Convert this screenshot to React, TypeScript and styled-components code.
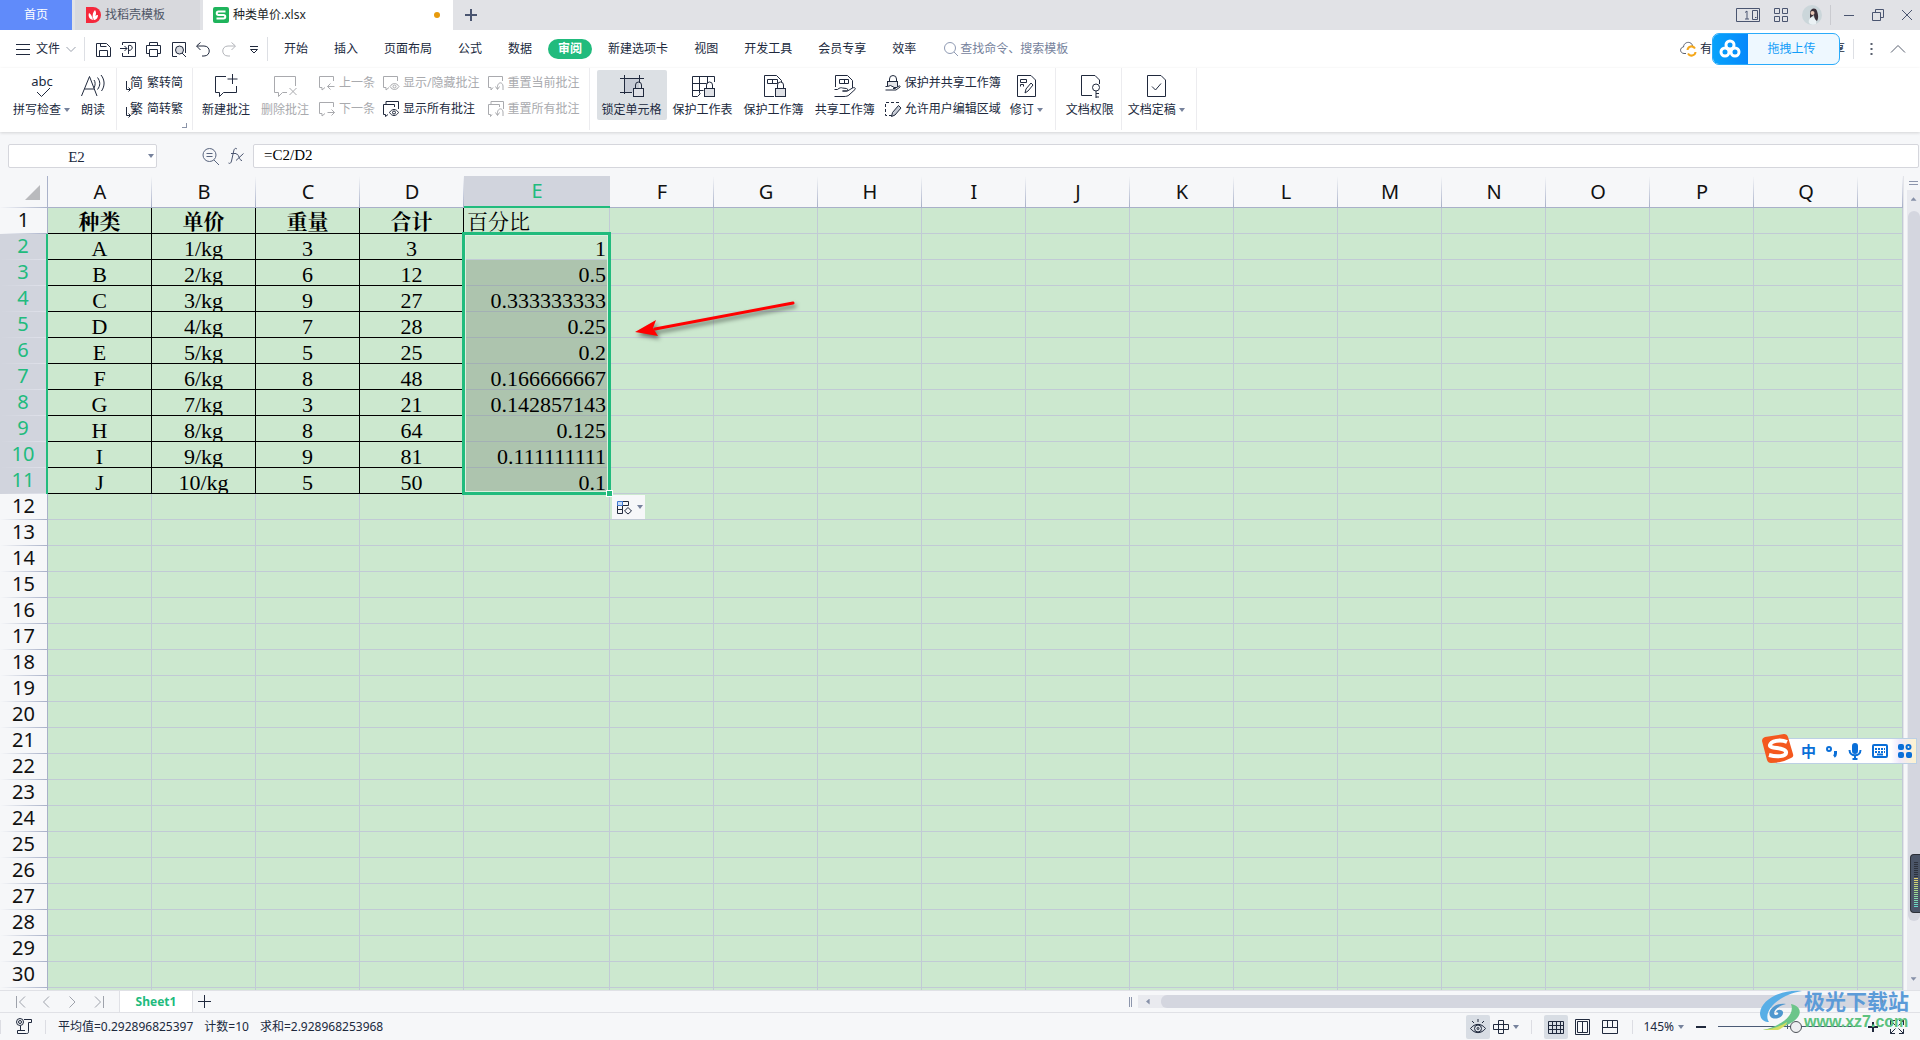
import React from "react";
import styled, { createGlobalStyle, css } from "styled-components";

const ui = `"Noto Sans", "Noto Sans CJK SC", sans-serif`;
const song = `"Liberation Serif", "SimSun", "Noto Serif CJK SC", "Noto Sans CJK SC", serif`;
const ink = "#20293d";
const dim = "#a9aaae";
const green = "#21bb7d";
const gridLine = "#c1cad5";
const headLine = "#a9b1c9";
const sheetFill = "#cce8cf";

const GlobalStyle = createGlobalStyle`
  *, *::before, *::after { box-sizing: border-box; }
  body { margin: 0; }
  button, input { font: inherit; color: inherit; margin: 0; }
  button { border: 0; background: none; padding: 0; cursor: default; }
  svg { display: block; flex: none; fill: none; overflow: visible; }
`;

const Page = styled.div`
  position: relative;
  display: flex;
  flex-direction: column;
  height: 100vh;
  overflow: hidden;
  background: #f6f7f9;
  color: ${ink};
  font: 12px/16px ${ui};
  white-space: nowrap;
`;

const Spacer = styled.div`
  flex: 1;
`;

/* ---------- title bar ---------- */
const TitleBar = styled.header`
  display: flex;
  height: 30px;
  background: #e1e2e6;
  color: #4a5570;
`;
const HomeTab = styled.button`
  width: 72px;
  margin-right: 3px;
  background: #608bfa;
  color: #fff;
`;
const FileTab = styled.button<{ $active?: boolean }>`
  display: flex;
  align-items: center;
  gap: 4px;
  width: ${(p) => (p.$active ? 250 : 125)}px;
  padding: 0 13px 0 10px;
  margin-right: ${(p) => (p.$active ? 0 : 3)}px;
  background: ${(p) => (p.$active ? "#fff" : "#d8d9dd")};
  color: ${(p) => (p.$active ? "#1c1f28" : "#4e5566")};
`;
const UnsavedDot = styled.i`
  width: 6px;
  height: 6px;
  margin-left: auto;
  border-radius: 3px;
  background: #e79a0c;
`;
const NewTab = styled.button`
  width: 36px;
  display: grid;
  place-items: center;
`;
const WindowTools = styled.div`
  display: flex;
  align-items: center;
  gap: 14px;
  padding-right: 7px;
`;
const WindowButtons = styled.div`
  display: flex;
  align-items: center;
  gap: 16px;
  height: 20px;
  padding-left: 12px;
  margin-left: -6px;
  border-left: 1px solid #cacbd0;
`;

/* ---------- menu bar ---------- */
const MenuBar = styled.nav`
  display: flex;
  align-items: center;
  height: 38px;
  padding: 0 14px 0 16px;
  background: #fff;
`;
const FileMenu = styled.button`
  display: flex;
  align-items: center;
  gap: 6px;
  height: 24px;
  padding-right: 8px;
  border-right: 1px solid #dddfe4;
`;
const QuickTools = styled.div`
  display: flex;
  align-items: center;
  gap: 8px;
  height: 24px;
  padding: 0 5px 0 10px;
  border-right: 1px solid #dddfe4;
`;
const MenuTabs = styled.div`
  display: flex;
  gap: 6px;
  padding-left: 6px;
`;
const MenuTab = styled.button<{ $active?: boolean }>`
  height: 20px;
  padding: 0 10px;
  border-radius: 10px;
  ${(p) =>
    p.$active &&
    css`
      background: ${green};
      && {
        color: #fff;
        font-weight: 700;
      }
    `}
`;
const SearchBox = styled.label`
  display: flex;
  align-items: center;
  gap: 2px;
  margin-left: 18px;
  color: #76829c;
  input {
    width: 160px;
    padding: 0;
    border: 0;
    outline: 0;
    background: none;
  }
  input::placeholder {
    color: #76829c;
    opacity: 1;
  }
`;
const CloudState = styled.button`
  display: flex;
  align-items: center;
  gap: 4px;
`;
const UploadButton = styled.button`
  display: flex;
  align-items: center;
  height: 32px;
  width: 128px;
  overflow: hidden;
  border: 1px solid #2aabfa;
  border-radius: 7px;
  background: #eef8ff;
  && {
    color: #129df8;
  }
  svg {
    background: linear-gradient(90deg, #07a3fb, #0788fb);
  }
  span {
    flex: 1;
    padding-right: 4px;
  }
`;
const ShareEnd = styled.span`
  width: 5px;
  overflow: hidden;
  direction: rtl;
`;
const MenuEnd = styled.div`
  display: flex;
  align-items: center;
  gap: 17px;
  height: 20px;
  margin-left: 8px;
  padding-left: 16px;
  border-left: 1px solid #dddfe4;
`;

/* ---------- ribbon ---------- */
const Ribbon = styled.div`
  position: relative;
  display: flex;
  height: 64px;
  padding-bottom: 2px;
  background: #fff;
  box-shadow: 0 1px 3px rgba(0, 0, 0, 0.14);
`;
const Group = styled.div<{ $left?: number; $right?: number }>`
  position: relative;
  display: flex;
  padding: 2px ${(p) => p.$right ?? 5}px 0 ${(p) => p.$left ?? 5}px;
  border-right: 1px solid #ececef;
`;
const Tool = styled.button<{ $off?: boolean; $on?: boolean }>`
  display: flex;
  flex-direction: column;
  align-items: center;
  gap: 4px;
  height: 50px;
  padding: 4px 5px 0;
  margin-right: 1px;
  border-radius: 2px;
  color: ${(p) => (p.$off ? dim : ink)};
  background: ${(p) => (p.$on ? "#dce0e4" : "none")};
`;
const ToolLabel = styled.span`
  display: flex;
  align-items: center;
  gap: 3px;
`;
const Stack = styled.div`
  display: flex;
  flex-direction: column;
  gap: 6px;
  padding-top: 3px;
`;
const MiniTool = styled.button<{ $off?: boolean }>`
  display: flex;
  align-items: center;
  gap: 4px;
  height: 20px;
  padding: 0 4px;
  color: ${(p) => (p.$off ? dim : ink)};
`;
const Caret = styled.i`
  border: 3px solid transparent;
  border-top: 4px solid #76829c;
  border-bottom: 0;
`;
const GroupCorner = styled.i`
  position: absolute;
  right: 5px;
  bottom: 2px;
  width: 5px;
  height: 5px;
  border: solid #8a93a8;
  border-width: 0 1px 1px 0;
`;

/* ---------- formula bar ---------- */
const FormulaBar = styled.div`
  display: flex;
  align-items: center;
  height: 44px;
  padding: 4px 1px 0 8px;
`;
const NameBox = styled.label`
  display: flex;
  align-items: center;
  width: 149px;
  height: 24px;
  padding-right: 2px;
  border: 1px solid #d5d6dc;
  border-radius: 2px;
  background: #fff;
  input {
    flex: 1;
    min-width: 0;
    padding: 2px 4px 0 0;
    border: 0;
    outline: 0;
    background: none;
    text-align: center;
    font: 15px/20px ${song};
  }
`;
const FormulaTools = styled.div`
  display: flex;
  align-items: center;
  gap: 9px;
  padding: 0 9px 0 45px;
`;
const FormulaInput = styled.input`
  flex: 1;
  min-width: 0;
  height: 24px;
  padding: 0 10px 2px;
  border: 1px solid #d5d6dc;
  border-radius: 2px;
  outline: 0;
  background: #fff;
  && {
    color: #000;
    font: 15px/20px ${song};
  }
`;

/* ---------- sheet ---------- */
const Workspace = styled.main`
  display: flex;
  flex: 1;
  min-height: 0;
`;
const SheetPane = styled.div`
  position: relative;
  flex: 1;
  min-width: 0;
  overflow: hidden;
`;
const Sheet = styled.table`
  width: 100%;
  table-layout: fixed;
  border-collapse: separate;
  border-spacing: 0;
`;
const Corner = styled.th`
  height: 32px;
  padding: 0 7px 7px 0;
  vertical-align: bottom;
  border-right: 1px solid ${headLine};
  border-bottom: 1px solid ${headLine};
  border-image: linear-gradient(to right, #f6f7f9, ${headLine}) 1;
  svg {
    margin-left: auto;
  }
`;
const ColHead = styled.th<{ $on?: boolean }>`
  height: 32px;
  padding: 0;
  color: ${(p) => (p.$on ? green : "#111")};
  font: 20px/28px ${ui};
  border-bottom: ${(p) => (p.$on ? `2px solid ${green}` : `1px solid ${headLine}`)};
  background: ${(p) =>
    p.$on
      ? "#d1d4dd"
      : `linear-gradient(#f6f7f9, ${headLine}) right / 1px 100% no-repeat`};
`;
const RowHead = styled.th<{ $on?: boolean }>`
  height: 26px;
  padding: 0 0 2px;
  color: ${(p) => (p.$on ? green : "#111")};
  font: 20px/24px ${ui};
  border-right: ${(p) => (p.$on ? `2px solid ${green}` : `1px solid ${headLine}`)};
  background: ${(p) =>
    p.$on
      ? "linear-gradient(90deg, #d1d4dd, #dfe1ea) bottom / 100% 1px no-repeat, #d1d4dd"
      : `linear-gradient(90deg, #f6f7f9, ${headLine}) bottom / 100% 1px no-repeat`};
`;
const Cell = styled.td<{ $boxed?: boolean; $filled?: boolean; $align?: string; $title?: boolean }>`
  height: 26px;
  padding: 4px 3px 0;
  overflow: hidden;
  color: #000;
  font-family: ${song};
  font-size: ${(p) => (p.$title ? 21 : 22)}px;
  font-weight: ${(p) => (p.$title && p.$boxed ? 700 : 400)};
  line-height: 21px;
  text-align: ${(p) => p.$align ?? "center"};
  background: ${(p) => (p.$filled ? "#adc4ae" : sheetFill)};
  border: solid ${(p) => (p.$boxed ? "#000" : p.$filled ? "#a3b0b4" : gridLine)};
  border-width: 0 1px 1px 0;
`;
const Selection = styled.div`
  position: absolute;
  left: 462px;
  top: 56px;
  width: 149px;
  height: 263px;
  border: 3px solid ${green};
  box-shadow: inset 0 0 0 1px #dcefdf;
  pointer-events: none;
  &::after {
    content: "";
    position: absolute;
    right: -5px;
    bottom: -5px;
    width: 7px;
    height: 7px;
    border: 1px solid #fff;
    background: ${green};
  }
`;
const FillOptions = styled.button`
  position: absolute;
  left: 612px;
  top: 319px;
  display: flex;
  align-items: center;
  gap: 4px;
  width: 33px;
  height: 24px;
  padding-left: 5px;
  background: #f6f7f9;
`;
const Pointer = styled.svg`
  position: absolute;
  left: 625px;
  top: 115px;
  filter: drop-shadow(2px 3px 2px rgba(0, 0, 0, 0.5));
`;

/* ---------- scroll bars ---------- */
const VScroll = styled.div`
  display: flex;
  flex-direction: column;
  width: 17px;
  padding-left: 3px;
  border-left: 1px solid #e3e4e9;
`;
const SplitGrip = styled.i`
  height: 4px;
  margin: 5px 2px;
  border: solid #8d96ac;
  border-width: 1px 0;
`;
const VTrack = styled.div`
  display: flex;
  flex: 1;
  flex-direction: column;
  align-items: center;
  padding: 6px 1px 8px;
  background: #e9eaef;
`;
const VThumb = styled.div`
  flex: 1;
  width: 12px;
  margin: 9px 0 55px;
  border-radius: 6px;
  background: #d4d6df;
`;
const ScrollArrow = styled.button<{ $dir: "up" | "down" | "left" | "right" }>`
  width: 6px;
  height: 6px;
  background: #8690a8;
  clip-path: ${(p) =>
    ({
      up: "polygon(0 80%, 50% 20%, 100% 80%)",
      down: "polygon(0 20%, 50% 80%, 100% 20%)",
      left: "polygon(80% 0, 20% 50%, 80% 100%)",
      right: "polygon(20% 0, 80% 50%, 20% 100%)",
    })[p.$dir]};
`;

/* ---------- sheet tabs and status ---------- */
const SheetBar = styled.div`
  display: flex;
  align-items: center;
  height: 22px;
  border-top: 1px solid #e0e1e6;
`;
const SheetNav = styled.div`
  display: flex;
  gap: 16px;
  width: 119px;
  padding-left: 16px;
`;
const SheetTab = styled.button`
  width: 74px;
  height: 21px;
  background: #fff;
  border: solid #e0e1e6;
  border-width: 0 1px;
  && {
    color: ${green};
    font-weight: 700;
  }
`;
const AddSheet = styled.button`
  margin-left: 5px;
`;
const HScroll = styled.div`
  display: flex;
  align-items: center;
  gap: 6px;
  width: calc(41% + 4px);
  padding-right: 26px;
`;
const HGrip = styled.i`
  width: 3px;
  height: 10px;
  border: solid #8d96ac;
  border-width: 0 1px;
`;
const HTrack = styled.div`
  display: flex;
  flex: 1;
  align-items: center;
  gap: 10px;
  padding: 0 8px 0 7px;
  background: #e9eaef;
`;
const HThumb = styled.div`
  flex: 1;
  height: 13px;
  border-radius: 6px;
  background: #d4d6df;
`;
const StatusBar = styled.footer`
  display: flex;
  align-items: center;
  height: 28px;
  border-top: 1px solid #e0e1e6;
`;
const Divider = styled.i<{ $gap: number }>`
  width: 1px;
  height: 14px;
  margin: 0 ${(p) => p.$gap}px;
  background: #dcdde3;
`;
const RecordButton = styled.button`
  margin-left: 15px;
`;
const Stats = styled.div`
  display: flex;
  gap: 11px;
`;
const StatusButton = styled.button<{ $on?: boolean }>`
  display: flex;
  align-items: center;
  justify-content: center;
  gap: 4px;
  min-width: 24px;
  height: 24px;
  border-radius: 2px;
  background: ${(p) => (p.$on ? "#d8dde4" : "none")};
`;
const ViewButtons = styled.div`
  display: flex;
  gap: 3px;
`;
const Zoom = styled.div`
  display: flex;
  align-items: center;
  gap: 12px;
  padding-right: 16px;
`;
const ZoomSlider = styled.input`
  appearance: none;
  width: 138px;
  height: 12px;
  background: linear-gradient(#4a5a75, #4a5a75) center / 1px 5px no-repeat,
    linear-gradient(#4a5a75, #4a5a75) center / 100% 1px no-repeat;
  &::-webkit-slider-thumb {
    appearance: none;
    width: 12px;
    height: 12px;
    border: 1px solid #4c5157;
    border-radius: 6px;
    background: #eeeff1;
  }
`;

/* ---------- floating widgets ---------- */
const ImeBar = styled.div`
  position: absolute;
  right: 3px;
  top: 738px;
  display: flex;
  align-items: center;
  gap: 10px;
  height: 26px;
  padding: 0 4px 0 24px;
  border: 1px solid #bcd0e4;
  background: linear-gradient(90deg, #fff 82%, #efe9fb 88%, #fdf3cf);
`;
const ImeLogo = styled.svg`
  position: absolute;
  left: -16px;
  top: -7px;
`;
const ImeMode = styled.button`
  && {
    color: #0a6fd8;
    font: 700 15px/20px "Noto Sans CJK SC", sans-serif;
  }
`;
const Meter = styled.div`
  position: absolute;
  right: 0;
  top: 854px;
  width: 10px;
  height: 59px;
  padding: 7px 2px 6px 3px;
  border: solid #2c3038;
  border-width: 1px 0 1px 1px;
  border-radius: 4px 0 0 4px;
  background: #4b5568;
`;
const MeterScale = styled.div`
  height: 45px;
  background: repeating-linear-gradient(transparent 0 1px, #4b5568 1px 2px),
    linear-gradient(#2d323d 35%, #e6cf6a 36%, #a4d98a 65%, #62d9cc);
`;
const Watermark = styled.div`
  position: absolute;
  right: 11px;
  bottom: 8px;
  display: flex;
  align-items: flex-end;
  pointer-events: none;
`;
const WatermarkText = styled.div`
  display: flex;
  flex-direction: column;
  color: #5c9bd8;
  font: 700 21px/24px "Noto Sans CJK SC", sans-serif;
  small {
    color: #5cc27e;
    font: 700 16px/20px "Liberation Sans", sans-serif;
  }
`;

/* ---------- icons ---------- */
type IconProps = { w?: number; h?: number; children: React.ReactNode; sw?: number; color?: string };
const Icon = ({ w = 16, h = w, children, sw = 1, color = "currentColor" }: IconProps) => (
  <svg width={w} height={h} viewBox={`0 0 ${w} ${h}`} stroke={color} strokeWidth={sw} aria-hidden>
    {children}
  </svg>
);
const padlock = (
  <>
    <path d="M15.500 14v-3a3 3 0 0 1 6 0v3" />
    <rect x="13.500" y="14.500" width="10" height="8" fill="#dfe1e6" />
  </>
);
const hand = <path d="M1.500 15.500h3c2-2 4-2 5-1.500l4 .5c1.500 0 1.500 2.500 0 2.500h-4 5l5-3c2-1 3.500 0 2.500 1.500l-6 5.500c-1 1-3 1.500-5 1.500h-9.500" fill="#fff" />;
const icons = {
  spell: (
    <Icon w={26} h={24}>
      <path d="M8 18l4.500 4.500L21 14" />
      <text x="13" y="12" textAnchor="middle" fontSize="13" fill={ink} stroke="none">abc</text>
    </Icon>
  ),
  read: (
    <Icon w={24}>
      <path d="M.5 22L8.500 2.500 16 22M3.500 15h10M13 6c1.500 2 1.500 5 0 8M16.500 3.500c3 4 3 8 0 12M20 1c4 5 4 11 .5 16" />
    </Icon>
  ),
  addNote: (
    <Icon w={24}>
      <path d="M12 2.500H1.500v16h4v4l4-4h13V12M18.500 0v10M13.500 5h10" />
    </Icon>
  ),
  delNote: (
    <Icon w={24}>
      <path d="M14 18.500H9.500l-4 4v-4h-4v-16h21V12M16.500 14l7 7M23.500 14l-7 7" />
    </Icon>
  ),
  prev: (
    <Icon><path d="M6 12.500l-3 2.500v-2.500H.5V1.500h14V6M15.500 11.500h-7M11.500 8.500l-3 3 3 3" /></Icon>
  ),
  next: (
    <Icon><path d="M6 12.500l-3 2.500v-2.500H.5V1.500h14V6M8.500 11.500h7M12.500 8.500l3 3-3 3" /></Icon>
  ),
  showOne: (
    <Icon><path d="M6 12.500l-3 2.500v-2.500H.5V1.500h14V6M7 11.500c2.500-4 6.500-4 9 0-2.500 4-6.500 4-9 0z" /><circle cx="11.500" cy="11.500" r="1.500" /></Icon>
  ),
  showAll: (
    <Icon><path d="M5 13.500l-2.500 2v-2h-2v-10h11V6M3 3V.5h12.500V8M6.500 11.500c2.500-4 6.500-4 9 0-2.500 4-6.500 4-9 0z" /><circle cx="11" cy="11.500" r="1.500" /></Icon>
  ),
  resetOne: (
    <Icon><path d="M5 12.500l-2 2.500v-2.500H.5V1.500h14V6M7.500 11.500l2 3 2-3M9.500 14c-1-7 5-8 5.500-3v4" /></Icon>
  ),
  resetAll: (
    <Icon><path d="M4 13.500l-1.500 2v-2h-2v-10h11V6M3 3V.5h12.500V8M7.500 11.500l2 3 2-3M9.500 14c-1-7 5-8 5.500-3v4" /></Icon>
  ),
  lockCell: (
    <Icon w={24}>
      <rect x="5" y="5" width="14" height="13" fill="#c7ccd6" stroke="none" />
      <path d="M4.500 1v19M19.500 1v8M0 4.500h24M0 18.500h12" />{padlock}
    </Icon>
  ),
  lockSheet: (
    <Icon w={24}>
      <path d="M23.500 8V2.500h-22v20h5l3-3M8.500 2.500v17M16.500 2.500v7M1.500 9.500h14M1.500 16.500h11" />{padlock}
    </Icon>
  ),
  lockBook: (
    <Icon w={24}>
      <path d="M12 22.500H2.500v-21h12l5 5V8M5.500 9.500v-4h10v4zM10.500 5.500v4" />{padlock}
    </Icon>
  ),
  shareBook: (
    <Icon w={24}>
      <path d="M2.500 13V1.500h12l5 5V15M6.500 9.500v-4h9v4zM11.500 5.500v4" />{hand}
    </Icon>
  ),
  protectShare: (
    <Icon>
      <path d="M4.500 6V4a3.500 3.500 0 0 1 7 0v2" /><rect x="2.500" y="6.500" width="10" height="6" fill="#e3e4e8" />
      <path d="M.5 11.500h2l3-1 3 1.500c1 .5.500 1.500-.5 1.500h2l4-2.500c1-.5 1.500.5 1 1l-4 3H.5" fill="#fff" />
    </Icon>
  ),
  editArea: (
    <Icon><path d="M14 1.500H.5v13H7" strokeDasharray="3 2" /><path d="M6.500 15.500l1-4 6-7 2.500 2.500-6 7z" fill="#c7ccd6" /></Icon>
  ),
  revise: (
    <Icon w={22} h={24}><path d="M20.500 6v16.500h-18v-21H16zM5.500 5.500h6v3h-6zM5.500 12.500v-2h3v2M10 19l1-4 5-6 2 2-5 6z" /></Icon>
  ),
  rights: (
    <Icon w={22} h={24}><path d="M13 21.500H2.500v-20H16l4.500 4.500v4M17 17v7M17 19.500h3M17 23h3" /><circle cx="17" cy="13.500" r="3.500" /></Icon>
  ),
  final: (
    <Icon w={22} h={24}><path d="M2.500 1.500H16l4.500 4.500v16.500h-18zM7 12.500l3.500 3.500 5.500-6.500" /></Icon>
  ),
};
const Glyph = ({ char }: { char: string }) => (
  <Icon w={17}>
    <path d="M.5 6v8.500h4M2.500 12.500l2 2-2 2" />
    <text x="4" y="12" fontSize="13" fill={ink} stroke="none">{char}</text>
  </Icon>
);

const columns = "ABCDEFGHIJKLMNOPQ".split("");
const titles = ["种类", "单价", "重量", "合计", "百分比"];
const data = [
  ["A", "1/kg", "3", "3", "1"],
  ["B", "2/kg", "6", "12", "0.5"],
  ["C", "3/kg", "9", "27", "0.333333333"],
  ["D", "4/kg", "7", "28", "0.25"],
  ["E", "5/kg", "5", "25", "0.2"],
  ["F", "6/kg", "8", "48", "0.166666667"],
  ["G", "7/kg", "3", "21", "0.142857143"],
  ["H", "8/kg", "8", "64", "0.125"],
  ["I", "9/kg", "9", "81", "0.111111111"],
  ["J", "10/kg", "5", "50", "0.1"],
];
const menuTabs = ["开始", "插入", "页面布局", "公式", "数据", "审阅", "新建选项卡", "视图", "开发工具", "会员专享", "效率"];

const Big = ({ icon, label, off, on, menu }: { icon: React.ReactNode; label: string; off?: boolean; on?: boolean; menu?: boolean }) => (
  <Tool $off={off} $on={on}>
    {icon}
    <ToolLabel>{label}{menu && <Caret />}</ToolLabel>
  </Tool>
);
const Mini = ({ icon, label, off }: { icon: React.ReactNode; label: string; off?: boolean }) => (
  <MiniTool $off={off}>{icon}{label}</MiniTool>
);

const SheetRow = ({ n }: { n: number }) => {
  const selected = n >= 2 && n <= 11;
  const values = n === 1 ? titles : data[n - 2] ?? [];
  return (
    <tr>
      <RowHead scope="row" $on={selected}>{n <= 30 ? n : null}</RowHead>
      {columns.map((c, i) => (
        <Cell
          key={c}
          $title={n === 1}
          $boxed={n <= 11 && i < 4}
          $filled={i === 4 && n > 2 && n <= 11}
          $align={i === 4 ? (n === 1 ? "left" : "right") : "center"}
        >
          {values[i]}
        </Cell>
      ))}
      <Cell />
    </tr>
  );
};

export default function App() {
  return (
    <Page>
      <GlobalStyle />
      <TitleBar>
        <HomeTab>首页</HomeTab>
        <FileTab>
          <svg width="16" height="16" viewBox="0 0 16 16" aria-hidden>
            <path d="M1 0h7a8 8 0 0 1 0 16H1z" fill="#f5283c" />
            <path d="M8 13C4 12 3 9 4 6c2 1 3 3 4 7zM8 12c-1-4 0-7 2-9 2 3 1 6-2 9zM8.500 13c0-3 2-5 4.500-5 0 3-2 5-4.500 5z" fill="#fff" />
          </svg>
          找稻壳模板
        </FileTab>
        <FileTab $active>
          <svg width="16" height="16" viewBox="0 0 16 16" aria-hidden>
            <rect width="16" height="16" rx="2" fill="#1fb45c" />
            <path d="M12.500 4.500H5.500a1.500 1.500 0 0 0 0 3.500h5a1.500 1.500 0 0 1 0 3.500H3.500" stroke="#fff" strokeWidth="2" />
          </svg>
          种类单价.xlsx
          <UnsavedDot />
        </FileTab>
        <NewTab aria-label="新建"><Icon w={12} sw={2}><path d="M6 0v12M0 6h12" /></Icon></NewTab>
        <Spacer />
        <WindowTools>
          <Icon w={24} h={14}>
            <path d="M.5 .5h23v13H.5zM16.500 2.500h5v9h-5zM19 9.500h1.500M9 4.500l2-1.500v8M9 11h4" />
          </Icon>
          <Icon w={14}><path d="M.5 .5h5v5h-5zM8.500 .5h5v5h-5zM.5 8.500h5v5h-5zM8.500 8.500h5v5h-5z" /></Icon>
          <svg width="20" height="20" viewBox="0 0 20 20" aria-hidden>
            <circle cx="10" cy="10" r="10" fill="#cbd6da" />
            <path d="M7 18c-1-3 1-5 3-6l4 1v6c-3 1-5 1-7-1z" fill="#eaf1f4" />
            <path d="M8 8c0-5 6-6 7-2 1 3 2 7 0 10-2-1-3-4-3-6l-4 3z" fill="#3a2f38" />
            <circle cx="10.500" cy="8" r="2" fill="#eac9b8" />
          </svg>
          <WindowButtons>
            <Icon w={12}><path d="M1 6.500h10" /></Icon>
            <Icon w={14}><path d="M4.500 4V1.500h8v8H10M1.500 4.500h8v8h-8z" /></Icon>
            <Icon w={12}><path d="M1 1l10 10M11 1L1 11" /></Icon>
          </WindowButtons>
        </WindowTools>
      </TitleBar>

      <MenuBar>
        <FileMenu>
          <Icon w={14}><path d="M0 2.500h14M0 7.500h14M0 12.500h14" /></Icon>
          文件
          <Icon w={10} color="#9aa0ac"><path d="M.5 3L5 7.500 9.500 3" /></Icon>
        </FileMenu>
        <QuickTools>
          <Icon w={17}><path d="M1.500 15.500V2.500h10l4 4v9zM4.500 15v-5.500h8V15M5.500 2.500v3h6" /></Icon>
          <Icon w={17}><path d="M2.500 4V1.500h13v14h-13V12M0 7.500h7M4.500 5l2.500 2.500L4.500 10M8.500 13V4.500c5-1 5 5 0 5" /></Icon>
          <Icon w={17}><path d="M4.500 4.500v-3h8v3M4.500 12.500h-3v-8h14v8h-3M4.500 8.500h8v7h-8z" /></Icon>
          <Icon w={17}><path d="M7 15.500H2.500v-14h13V12M12 12l4 4" /><circle cx="9.500" cy="9" r="4" fill="#d9dbe0" /></Icon>
          <Icon w={17}><path d="M5.500 1.500l-4 3.500 4 4M2 5h7c7 0 7 10 0 10H7" /></Icon>
          <Icon w={17} color="#b3b5ba"><path d="M11.500 1.500l4 3.500-4 4M15 5H8C1 5 1 15 8 15h2" /></Icon>
          <Icon w={17}><path d="M5 5.500h8M5.500 8.500L9 12l3.500-3.500z" /></Icon>
        </QuickTools>
        <MenuTabs>
          {menuTabs.map((t) => <MenuTab key={t} $active={t === "审阅"}>{t}</MenuTab>)}
        </MenuTabs>
        <SearchBox>
          <Icon w={14} color="#8f9ab3"><circle cx="6" cy="6" r="5.500" /><path d="M10 10l4 4" /></Icon>
          <input placeholder="查找命令、搜索模板" aria-label="查找命令、搜索模板" />
        </SearchBox>
        <Spacer />
        <CloudState>
          <Icon w={16}>
            <path d="M6 12.500H4C-.5 12-.5 6.500 3.500 6 4 0 12 0 12.500 5" stroke="#59606f" />
            <path d="M7.500 9a4 4 0 0 1 7.500-1.500M15.500 11a4 4 0 0 1-7.500 1.500" stroke="#f5a81c" strokeWidth="2" />
          </Icon>
          有
        </CloudState>
        <UploadButton>
          <svg width="35" height="30" viewBox="0 0 35 30" stroke="#fff" strokeWidth="3" aria-hidden>
            <circle cx="17" cy="11" r="4" /><circle cx="12" cy="18" r="4" /><circle cx="22" cy="18" r="4" />
          </svg>
          <span>拖拽上传</span>
        </UploadButton>
        <ShareEnd>享</ShareEnd>
        <MenuEnd>
          <Icon w={3} h={14} color="#59606f" sw={2}><path d="M1.500 1v2M1.500 6v2M1.500 11v2" /></Icon>
          <Icon w={16} h={10} color="#59606f"><path d="M1 8.500l7-7 7 7" /></Icon>
        </MenuEnd>
      </MenuBar>

      <Ribbon>
        <Group $left={8}>
          <Big icon={icons.spell} label="拼写检查" menu />
          <Big icon={icons.read} label="朗读" />
        </Group>
        <Group>
          <Stack>
            <Mini icon={<Glyph char="简" />} label="繁转简" />
            <Mini icon={<Glyph char="繁" />} label="简转繁" />
          </Stack>
          <GroupCorner />
        </Group>
        <Group $left={4}>
          <Big icon={icons.addNote} label="新建批注" />
          <Big icon={icons.delNote} label="删除批注" off />
          <Stack>
            <Mini icon={icons.prev} label="上一条" off />
            <Mini icon={icons.next} label="下一条" off />
          </Stack>
          <Stack>
            <Mini icon={icons.showOne} label="显示/隐藏批注" off />
            <Mini icon={icons.showAll} label="显示所有批注" />
          </Stack>
          <Stack>
            <Mini icon={icons.resetOne} label="重置当前批注" off />
            <Mini icon={icons.resetAll} label="重置所有批注" off />
          </Stack>
        </Group>
        <Group $left={7} $right={6}>
          <Big icon={icons.lockCell} label="锁定单元格" on />
          <Big icon={icons.lockSheet} label="保护工作表" />
          <Big icon={icons.lockBook} label="保护工作簿" />
          <Big icon={icons.shareBook} label="共享工作簿" />
          <Stack>
            <Mini icon={icons.protectShare} label="保护并共享工作簿" />
            <Mini icon={icons.editArea} label="允许用户编辑区域" />
          </Stack>
          <Big icon={icons.revise} label="修订" menu />
        </Group>
        <Group $right={1}>
          <Big icon={icons.rights} label="文档权限" />
        </Group>
        <Group $left={1}>
          <Big icon={icons.final} label="文档定稿" menu />
        </Group>
      </Ribbon>

      <FormulaBar>
        <NameBox>
          <input defaultValue="E2" aria-label="名称框" />
          <Caret />
        </NameBox>
        <FormulaTools>
          <Icon w={17} color="#59657f"><circle cx="7.500" cy="7" r="6.500" /><path d="M12 12l5 5M4.500 5.500h6M4.500 8.500h6" /></Icon>
          <Icon w={16} h={18} color="#4a5570">
            <path d="M9 2c-2-1.500-3 0-3.500 3l-2 9c-.5 2-1.500 3-3 2M3 6.500h5" />
            <path d="M8 7c3-1 3 7 6 6.500M15.500 6.500L8 13.500" />
          </Icon>
        </FormulaTools>
        <FormulaInput defaultValue="=C2/D2" aria-label="编辑栏" />
      </FormulaBar>

      <Workspace>
        <SheetPane>
          <Sheet>
            <colgroup>
              <col style={{ width: 48 }} />
              {columns.map((c) => <col key={c} style={{ width: c === "E" ? 146 : 104 }} />)}
              <col />
            </colgroup>
            <thead>
              <tr>
                <Corner><svg width="15" height="15" viewBox="0 0 15 15" aria-hidden><path d="M15 0v15H0z" fill="#b9babd" /></svg></Corner>
                {columns.map((c) => <ColHead key={c} scope="col" $on={c === "E"}>{c}</ColHead>)}
                <ColHead />
              </tr>
            </thead>
            <tbody>
              {Array.from({ length: 31 }, (_, i) => <SheetRow key={i} n={i + 1} />)}
            </tbody>
          </Sheet>
          <Selection />
          <FillOptions aria-label="填充选项">
            <Icon w={16}>
              <path d="M.5 6.500h5v4h-5zM.5 10.500h5v4h-5zM5.500 2.500h6v4h-6z" />
              <path d="M.5 2.500h5v4h-5z" fill="#c7dcf8" stroke="#3f78d0" />
              <path d="M11 8.500l3.500 3.500-3.500 3-3.500-3z" fill="#f6f7f9" />
            </Icon>
            <Caret />
          </FillOptions>
          <Pointer width="180" height="60" viewBox="0 0 180 60" aria-hidden>
            <path d="M168 12L30 38" stroke="#f00" strokeWidth="3" strokeLinecap="round" />
            <path d="M10 41l21-12-3 8 5 8z" fill="#f00" />
          </Pointer>
        </SheetPane>
        <VScroll>
          <SplitGrip />
          <VTrack>
            <ScrollArrow $dir="up" aria-label="向上" />
            <VThumb />
            <ScrollArrow $dir="down" aria-label="向下" />
          </VTrack>
        </VScroll>
      </Workspace>

      <SheetBar>
        <SheetNav>
          <Icon w={10} h={12} color="#9ea2ab"><path d="M.5 0v12M9 .5L3.500 6 9 11.500" /></Icon>
          <Icon w={10} h={12} color="#9ea2ab"><path d="M7 .5L1.500 6 7 11.500" /></Icon>
          <Icon w={10} h={12} color="#9ea2ab"><path d="M1.500 .5L7 6l-5.500 5.500" /></Icon>
          <Icon w={10} h={12} color="#9ea2ab"><path d="M9.500 0v12M1 .5L6.500 6 1 11.500" /></Icon>
        </SheetNav>
        <SheetTab>Sheet1</SheetTab>
        <AddSheet aria-label="新建工作表"><Icon w={13}><path d="M6.500 0v13M0 6.500h13" /></Icon></AddSheet>
        <Spacer />
        <HScroll>
          <HGrip />
          <HTrack>
            <ScrollArrow $dir="left" aria-label="向左" />
            <HThumb />
            <ScrollArrow $dir="right" aria-label="向右" />
          </HTrack>
        </HScroll>
      </SheetBar>

      <StatusBar>
        <Divider $gap={0} />
        <RecordButton aria-label="录制">
          <Icon w={17}><circle cx="4" cy="4" r="3.500" /><circle cx="4" cy="4" r="1.500" /><path d="M8 1.500h7.500v3h-3v9c0 2-1 2-2 2H1.500v-3H9M4.500 8v4" /></Icon>
        </RecordButton>
        <Divider $gap={12} />
        <Stats>
          <span>平均值=0.292896825397</span>
          <span>计数=10</span>
          <span>求和=2.928968253968</span>
        </Stats>
        <Spacer />
        <ViewButtons>
          <StatusButton $on aria-label="护眼模式">
            <Icon w={16}><path d="M.5 9.500c4-5.500 11-5.500 15 0-4 5.500-11 5.500-15 0zM8 0v3M2 2l2 2M14 2l-2 2" /><circle cx="8" cy="9.500" r="3.500" /><circle cx="8" cy="9.500" r="1" /></Icon>
          </StatusButton>
          <StatusButton aria-label="阅读模式">
            <Icon w={16}><path d="M5.500 1.500h5v13h-5zM.5 5.500h15v5H.5z" /></Icon>
            <Caret />
          </StatusButton>
        </ViewButtons>
        <Divider $gap={12} />
        <ViewButtons>
          <StatusButton $on aria-label="普通视图"><Icon w={16}><path d="M.5 2.500h15v12H.5zM.5 6.500h15M.5 10.500h15M4.500 2.500v12M8.500 2.500v12M12.500 2.500v12" /></Icon></StatusButton>
          <StatusButton aria-label="分页预览"><Icon w={16}><path d="M.5 .5h14v15H.5zM2.500 2.500h10v11h-10zM7.500 2.500v11" /></Icon></StatusButton>
          <StatusButton aria-label="页面布局"><Icon w={16}><path d="M.5 1.500h15v13H.5zM.5 8.500h10M5.500 1.500v7M10.500 1.500v7h5" /></Icon></StatusButton>
        </ViewButtons>
        <Divider $gap={10} />
        <Zoom>
          <StatusButton>
            145%
            <Caret />
          </StatusButton>
          <Icon w={10} sw={2}><path d="M0 5h10" /></Icon>
          <ZoomSlider type="range" min={0} max={100} defaultValue={57} aria-label="缩放" />
          <Icon w={10} sw={2}><path d="M0 5h10M5 0v10" /></Icon>
          <Icon w={14}><path d="M5 .5H.5V5M.5 .5l5 5M9 .5h4.500V5M13.500 .5l-5 5M5 13.500H.5V9M.5 13.500l5-5M9 13.500h4.500V9M13.500 13.500l-5-5" /></Icon>
        </Zoom>
      </StatusBar>

      <ImeBar>
        <ImeLogo width="34" height="34" viewBox="0 0 34 34" aria-hidden>
          <path d="M1 9q0-3 3-4L23 2q3 0 4 3l5 17q1 3-2 4-9 5-20 5-3 0-4-3z" fill="#f4581e" />
          <path d="M26 10c-7-3-16-1-17 3s15 2 16 7-10 5-17 3" stroke="#fff" strokeWidth="4" />
        </ImeLogo>
        <ImeMode>中</ImeMode>
        <Icon w={12} color="#0a6fd8" sw={2}><circle cx="3" cy="4" r="2" /><path d="M9.500 6v2.500q0 2-1.500 3" strokeWidth="3" /></Icon>
        <Icon w={14} h={17} color="#0a6fd8" sw={2}><rect x="5" y="1" width="4" height="9" rx="2" fill="#0a6fd8" /><path d="M1.500 7c0 7 11 7 11 0M7 13v3M4.500 16h5" /></Icon>
        <Icon w={16} h={14} color="#0a6fd8" sw={2}><rect x="1" y="1" width="14" height="12" rx="1" /><path d="M3 5h10M3 8h10" strokeDasharray="2 1" /><path d="M5 10.500h6" /></Icon>
        <svg width="14" height="14" viewBox="0 0 14 14" aria-hidden>
          <g fill="#0a6fd8"><rect width="6" height="6" rx="2" /><rect y="8" width="6" height="6" rx="2" /><rect x="8" y="8" width="6" height="6" rx="2" /></g>
          <circle cx="10.500" cy="3" r="2" stroke="#0a6fd8" strokeWidth="2" />
        </svg>
      </ImeBar>
      <Meter><MeterScale /></Meter>
      <Watermark>
        <svg width="46" height="42" viewBox="0 0 46 42" aria-hidden>
          <path d="M44 1C22-1 3 10 2 23c0 6 4 9 9 9C4 22 20 5 44 1z" fill="#58aee6" />
          <path d="M28 14c-10-2-19 6-16 12 3 5 14 2 13-4-1-3-6-3-7 0 3 0 3 3 0 3-4 0-2-8 10-11z" fill="#4f97cf" />
          <path d="M33 14c10 2 12 10 3 17-8 6-20 9-31 9 14-3 33-13 28-26z" fill="#6cc58a" />
          <path d="M5 40c10-1 18-4 24-8 0 3-6 7-9 8z" fill="#d3de62" />
        </svg>
        <WatermarkText>极光下载站<small>www.xz7.com</small></WatermarkText>
      </Watermark>
    </Page>
  );
}
